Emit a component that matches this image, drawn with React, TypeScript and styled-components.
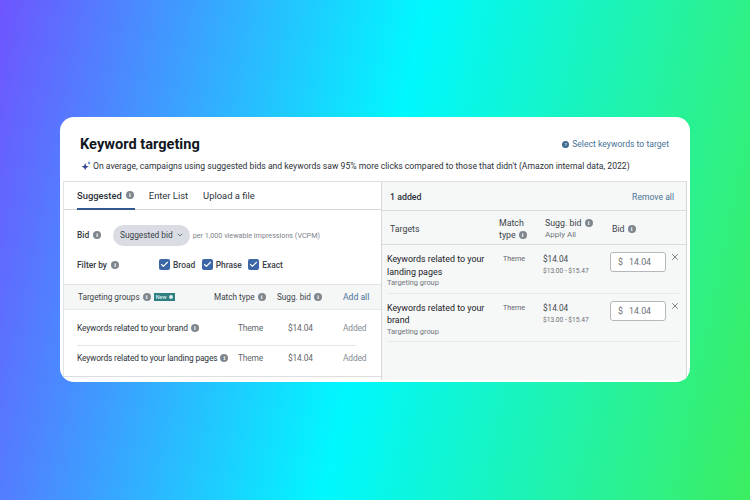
import React from "react";
import styled, { createGlobalStyle } from "styled-components";
import { Check, ChevronDown, X } from "lucide-react";

const GlobalStyle = createGlobalStyle`
  html, body {
    margin: 0;
    padding: 0;
  }
  body {
    font-family: Roboto, "Liberation Sans", sans-serif;
    color: #20262e;
  }
`;

const Page = styled.div`
  width: 750px;
  height: 500px;
  box-sizing: border-box;
  padding: 117px 60px 118px;
  background: linear-gradient(101.6deg, #6e55ff 0%, #00f8ff 50%, #3cee60 100%);
  overflow: hidden;
`;

const Card = styled.div`
  height: 265px;
  box-sizing: border-box;
  display: flex;
  flex-direction: column;
  background: #fff;
  border-radius: 14px;
  overflow: hidden;
  padding: 0 3px 2px 3px;
`;

const Header = styled.div`
  height: 64px;
  box-sizing: border-box;
  padding: 17px 18px 0 17px;
  display: flex;
  flex-direction: column;
  gap: 5px;
`;

const TitleRow = styled.div`
  display: flex;
  align-items: center;
  justify-content: space-between;
`;

const Title = styled.h1`
  margin: 0;
  font-size: 14.6px;
  line-height: 20px;
  font-weight: 700;
  color: #11171f;
`;

const HelpLink = styled.div`
  display: flex;
  align-items: center;
  gap: 3px;
  font-size: 8.65px;
  color: #4a7396;
`;

const Note = styled.div`
  display: flex;
  align-items: center;
  gap: 2px;
  font-size: 8.62px;
  line-height: 14px;
  white-space: nowrap;
  color: #2b3138;
`;

const SparkleIcon = styled.svg`
  margin-left: 1px;
  flex: none;
`;

const Panels = styled.div`
  flex: 1;
  min-height: 0;
  display: grid;
  grid-template-columns: 319px 1fr;
  border-top: 1px solid #dcdfe2;
`;

const LeftPanel = styled.section`
  align-self: start;
  display: flex;
  flex-direction: column;
  min-width: 0;
  border-left: 1px solid #e2e4e6;
  border-bottom: 1px solid #dcdfe2;
  border-right: 1px solid #cfd2d5;
`;

const RightPanel = styled.section`
  display: flex;
  flex-direction: column;
  min-width: 0;
  background: #f6f7f7;
  border-left: 1px solid #d5d8da;
  border-right: 1px solid #d5d8da;
  margin-left: -1px;
`;

const Tabs = styled.div`
  height: 28px;
  box-sizing: border-box;
  display: flex;
  align-items: stretch;
  gap: 14px;
  padding-left: 13px;
  border-bottom: 1px solid #d5d8db;
`;

const Tab = styled.div<{ $active?: boolean }>`
  display: flex;
  align-items: center;
  gap: 4px;
  padding-right: 1px;
  margin-bottom: -1px;
  font-size: 9.4px;
  font-weight: ${({ $active }) => ($active ? 500 : 400)};
  color: #2c333a;
  border-bottom: 2px solid ${({ $active }) => ($active ? "#34598e" : "transparent")};
`;

const BidRow = styled.div`
  height: 45px;
  padding: 5px 0 0 13px;
  box-sizing: border-box;
  display: flex;
  align-items: center;
`;

const FieldLabel = styled.div<{ $width: number }>`
  width: ${({ $width }) => $width}px;
  display: flex;
  align-items: center;
  gap: 4px;
  font-size: 8.4px;
  font-weight: 500;
  color: #333a41;
`;

const Pill = styled.div`
  height: 21px;
  padding: 0 6px 0 7px;
  display: flex;
  align-items: center;
  gap: 3px;
  border-radius: 11px;
  background: #d9dce3;
  font-size: 8.3px;
  color: #3a4149;
`;

const Hint = styled.span`
  margin-left: 3px;
  font-size: 7.2px;
  color: #7d8389;
`;

const FilterRow = styled.div`
  height: 30px;
  padding: 0 0 10px 13px;
  display: flex;
  align-items: center;
  box-sizing: border-box;
  border-bottom: 1px solid #e1e3e5;
`;

const CheckItem = styled.div`
  display: flex;
  align-items: center;
  gap: 3px;
  margin-right: 6.5px;
  font-size: 8.4px;
  font-weight: 500;
  color: #3a4148;
`;

const CheckBox = styled.span`
  width: 11px;
  height: 11px;
  border-radius: 2px;
  background: #3c67a6;
  display: flex;
  align-items: center;
  justify-content: center;
  color: #fff;
`;

const GroupGrid = styled.div`
  display: grid;
  grid-template-columns: 137px 63px 66px 1fr;
  align-items: center;
  padding-left: 13px;
`;

const GroupHead = styled(GroupGrid)`
  height: 25px;
  box-sizing: border-box;
  background: #f5f6f6;
  border-bottom: 1px solid #e6e8e9;
  font-size: 8.2px;
  color: #3c4349;
`;

const HeadCell = styled.div<{ $indent?: number }>`
  display: flex;
  align-items: center;
  gap: 3px;
  white-space: nowrap;
  padding-left: ${({ $indent }) => $indent ?? 0}px;
`;

const NewBadge = styled.span`
  display: inline-flex;
  align-items: center;
  gap: 2px;
  height: 8px;
  padding: 0 2px;
  background: #2f7f80;
  color: #d8eeee;
  font-size: 5.5px;
  font-weight: 500;
`;

const ActionLink = styled.span`
  font-size: 8.6px;
  font-weight: 400;
  white-space: nowrap;
  color: #4a7396;
`;

const GroupRow = styled(GroupGrid)<{ $divided?: boolean }>`
  height: ${({ $divided }) => ($divided ? 31 : 35)}px;
  box-sizing: border-box;
  padding-bottom: ${({ $divided }) => ($divided ? 6 : 0)}px;
  font-size: 8.4px;
  letter-spacing: -0.15px;
  color: #2c333a;
  position: relative;
  &::before {
    content: "";
    display: ${({ $divided }) => ($divided ? "block" : "none")};
    position: absolute;
    left: 13px;
    width: 279px;
    top: 0;
    border-top: 1px solid #e3e5e7;
  }
`;

const MutedCell = styled.div<{ $indent?: number; $faint?: boolean }>`
  color: ${({ $faint }) => ($faint ? "#858b90" : "#5f666c")};
  padding-left: ${({ $indent }) => $indent ?? 0}px;
`;

const AddedHead = styled.div`
  height: 27px;
  padding: 1px 12px 0 8px;
  display: flex;
  align-items: center;
  justify-content: space-between;
  border-bottom: 1px solid #d9dbdd;
  font-size: 8.8px;
  font-weight: 500;
  color: #2c333a;
`;

const TargetHead = styled.div`
  display: grid;
  grid-template-columns: 109px 46px 67px 1fr;
  height: 34px;
  box-sizing: border-box;
  padding: 3px 6px 0 8px;
  align-items: center;
  border-bottom: 1px solid #d9dbdd;
  font-size: 8.8px;
  line-height: 12.5px;
  color: #3c4349;
`;

const SubAction = styled.div`
  font-size: 8px;
  color: #70767c;
`;

const TargetRow = styled.div`
  display: grid;
  grid-template-columns: 116px 40px 67px 1fr;
  height: 48.5px;
  margin: 0 7px 0 5px;
  padding-top: 8px;
  box-sizing: border-box;
  border-bottom: 1px solid #e6e8e9;
`;

const TargetName = styled.div`
  font-size: 8.9px;
  line-height: 12.5px;
  font-weight: 400;
  color: #1c2228;
  width: 102px;
`;

const TargetKind = styled.div`
  font-size: 7.4px;
  line-height: 10px;
  color: #70767c;
`;

const ThemeCell = styled.div`
  font-size: 7.2px;
  line-height: 12px;
  color: #5f666c;
`;

const BidCell = styled.div`
  font-size: 8.2px;
  line-height: 12px;
  color: #444b52;
`;

const BidRange = styled.div`
  font-size: 6.6px;
  line-height: 12px;
  color: #6a7076;
`;

const BidAction = styled.div`
  display: flex;
  align-items: flex-start;
  justify-content: space-between;
  margin: -1px -1px 0 0;
`;

const BidInput = styled.div`
  width: 56px;
  height: 20px;
  box-sizing: border-box;
  padding-left: 7px;
  display: flex;
  align-items: center;
  gap: 6px;
  background: #fff;
  border: 1px solid #b4b8bc;
  border-radius: 3px;
  font-size: 8.8px;
  color: #6a7076;
`;

const Remove = styled.span`
  display: flex;
  color: #555c63;
`;

const InfoDot = styled.span<{ $size?: number; $tone?: string }>`
  width: ${({ $size }) => $size ?? 8}px;
  height: ${({ $size }) => $size ?? 8}px;
  flex: none;
  border-radius: 50%;
  background: ${({ $tone }) => $tone ?? "#7f868d"};
  color: #fff;
  font-size: ${({ $size }) => ($size ?? 8) - 2}px;
  line-height: ${({ $size }) => $size ?? 8}px;
  font-weight: 700;
  letter-spacing: 0;
  text-align: center;
  font-family: "Liberation Serif", serif;
`;

const Info = ({ size }: { size?: number }) => <InfoDot $size={size}>i</InfoDot>;

const Sparkle = () => (
  <SparkleIcon width="10" height="10" viewBox="0 0 12 12">
    <path d="M5 2.5 6.2 5.6 9.4 6.8 6.2 8 5 11 3.8 8 .6 6.8 3.8 5.6Z" fill="#2f3f8f" />
    <path d="M9.6.4 10.2 1.9 11.7 2.5 10.2 3.1 9.6 4.6 9 3.1 7.5 2.5 9 1.9Z" fill="#3f63c9" />
  </SparkleIcon>
);

const targets = [
  { name: "Keywords related to your landing pages" },
  { name: "Keywords related to your brand" },
];

const filters = ["Broad", "Phrase", "Exact"];

export default function App() {
  return (
    <Page>
      <GlobalStyle />
      <Card>
        <Header>
          <TitleRow>
            <Title>Keyword targeting</Title>
            <HelpLink>
              <InfoDot $size={7} $tone="#3f6b8f">?</InfoDot>
              Select keywords to target
            </HelpLink>
          </TitleRow>
          <Note>
            <Sparkle />
            On average, campaigns using suggested bids and keywords saw 95% more clicks compared to those that didn't (Amazon internal data, 2022)
          </Note>
        </Header>
        <Panels>
          <LeftPanel>
            <Tabs>
              <Tab $active>Suggested <Info /></Tab>
              <Tab>Enter List</Tab>
              <Tab>Upload a file</Tab>
            </Tabs>
            <BidRow>
              <FieldLabel $width={36}>Bid <Info /></FieldLabel>
              <Pill>Suggested bid <ChevronDown size={8} strokeWidth={2} /></Pill>
              <Hint>per 1,000 viewable impressions (VCPM)</Hint>
            </BidRow>
            <FilterRow>
              <FieldLabel $width={82}>Filter by <Info /></FieldLabel>
              {filters.map((f) => (
                <CheckItem key={f}>
                  <CheckBox><Check size={9} strokeWidth={3} /></CheckBox>
                  {f}
                </CheckItem>
              ))}
            </FilterRow>
            <GroupHead>
              <HeadCell $indent={1}>Targeting groups <Info /> <NewBadge>New <InfoDot $size={4} $tone="#d8eeee" /></NewBadge></HeadCell>
              <HeadCell>Match type <Info /></HeadCell>
              <HeadCell>Sugg. bid <Info /></HeadCell>
              <ActionLink>Add all</ActionLink>
            </GroupHead>
            <GroupRow>
              <HeadCell>Keywords related to your brand <Info /></HeadCell>
              <MutedCell $indent={24}>Theme</MutedCell>
              <MutedCell $indent={11}>$14.04</MutedCell>
              <MutedCell $faint>Added</MutedCell>
            </GroupRow>
            <GroupRow $divided>
              <HeadCell>Keywords related to your landing pages <Info /></HeadCell>
              <MutedCell $indent={24}>Theme</MutedCell>
              <MutedCell $indent={11}>$14.04</MutedCell>
              <MutedCell $faint>Added</MutedCell>
            </GroupRow>
          </LeftPanel>
          <RightPanel>
            <AddedHead>
              1 added
              <ActionLink>Remove all</ActionLink>
            </AddedHead>
            <TargetHead>
              <div>Targets</div>
              <div>Match<HeadCell>type <Info /></HeadCell></div>
              <div>
                <HeadCell>Sugg. bid <Info /></HeadCell>
                <SubAction>Apply All</SubAction>
              </div>
              <HeadCell>Bid <Info /></HeadCell>
            </TargetHead>
            {targets.map((t) => (
              <TargetRow key={t.name}>
                <div>
                  <TargetName>{t.name}</TargetName>
                  <TargetKind>Targeting group</TargetKind>
                </div>
                <ThemeCell>Theme</ThemeCell>
                <div>
                  <BidCell>$14.04</BidCell>
                  <BidRange>$13.00 - $15.47</BidRange>
                </div>
                <BidAction>
                  <BidInput><span>$</span><span>14.04</span></BidInput>
                  <Remove><X size={10} strokeWidth={1.8} /></Remove>
                </BidAction>
              </TargetRow>
            ))}
          </RightPanel>
        </Panels>
      </Card>
    </Page>
  );
}
